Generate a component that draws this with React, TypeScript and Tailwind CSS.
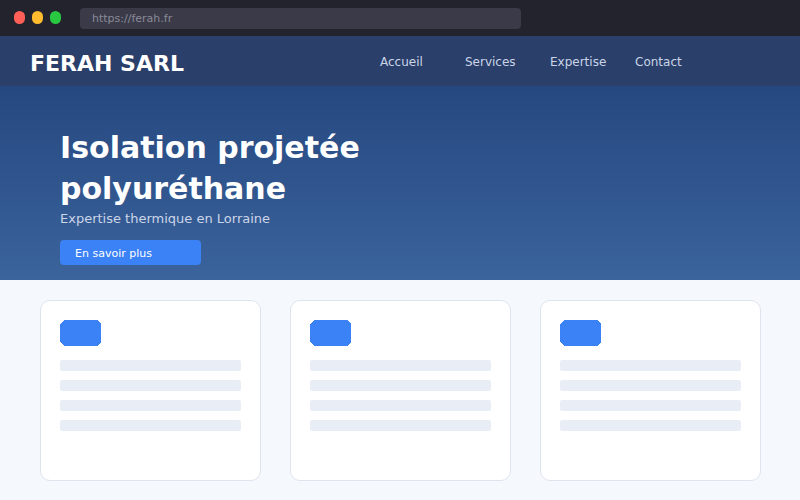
const navLinks = ["Accueil", "Services", "Expertise", "Contact"];
const cards = [0, 1, 2];
const lines = [0, 1, 2, 3];

function CardIcon() {
  return (
    <svg width="41" height="26" viewBox="0 0 41 26" className="block" shapeRendering="crispEdges">
      <polygon points="4,0 37,0 41,4 41,22 37,26 4,26 0,22 0,4" fill="#3b82f6" />
    </svg>
  );
}

export default function App() {
  return (
    <div className="w-[800px] h-[500px] overflow-hidden flex flex-col bg-[#f5f8fd] font-['DejaVu_Sans',sans-serif]">
      <div className="h-9 shrink-0 flex items-center bg-[#23232e] pl-[14px]">
        <div className="flex gap-[7px] mb-px">
          <span className="w-[11px] h-[13px] rounded-full bg-[#ff5f57]" />
          <span className="w-[11px] h-[13px] rounded-full bg-[#febc2e]" />
          <span className="w-[11px] h-[13px] rounded-full bg-[#28c840]" />
        </div>
        <div className="ml-[19px] w-[441px] h-[21px] rounded-[4px] bg-[#3a3a48] flex items-center pl-3 pt-[3px] text-[11px] text-[#8a8a98]">
          https://ferah.fr
        </div>
      </div>

      <nav className="h-[50px] shrink-0 flex items-center bg-[#2a3f6a] pl-[30px]">
        <span className="w-[350px] mt-1 text-[22px] font-bold text-white">FERAH SARL</span>
        <div className="flex">
          {navLinks.map((link) => (
            <span key={link} className="w-[85px] mt-[2px] text-xs text-[#cbd5e8]">
              {link}
            </span>
          ))}
        </div>
      </nav>

      <section className="h-[194px] shrink-0 bg-gradient-to-b from-[#264880] to-[#3b639c] pl-[60px] pt-[41px]">
        <h1 className="text-[30px] leading-[41px] font-bold text-white">
          Isolation projetée
          <br />
          polyuréthane
        </h1>
        <p className="text-[13px] leading-[19px] text-[#cbd5e8]">Expertise thermique en Lorraine</p>
        <button className="mt-[12px] w-[141px] h-[25px] rounded-[4px] bg-[#3b82f6] pl-[15px] pt-[3px] text-left text-[11px] text-white">
          En savoir plus
        </button>
      </section>

      <section className="flex gap-[29px] pl-10 pt-5">
        {cards.map((card) => (
          <div key={card} className="w-[221px] h-[181px] rounded-[10px] border border-[#dde4ee] bg-white px-[19px] pt-[19px]">
            <CardIcon />
            <div className="mt-[14px] flex flex-col gap-[9px]">
              {lines.map((line) => (
                <div key={line} className="h-[11px] rounded-[2px] bg-[#e9eef6]" />
              ))}
            </div>
          </div>
        ))}
      </section>
    </div>
  );
}
